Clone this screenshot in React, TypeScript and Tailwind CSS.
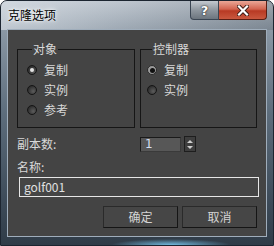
import React from "react";

type RadioKind = "off" | "onLight" | "onDark";

function Radio({ kind }: { kind: RadioKind }) {
  if (kind === "onDark") {
    return (
      <span className="w-[10px] h-[10px] shrink-0 rounded-full border border-[#2a2a2a] bg-[#9a9a9a] flex items-center justify-center">
        <span className="w-[5px] h-[5px] rounded-full bg-[#111]" />
      </span>
    );
  }
  return (
    <span className="w-[10px] h-[10px] shrink-0 rounded-full border border-[#151515] bg-[radial-gradient(circle_at_65%_65%,#5c5c5c,#2c2c2c_75%)] flex items-center justify-center">
      {kind === "onLight" && <span className="w-[4px] h-[4px] rounded-full bg-[#e4e4e4]" />}
    </span>
  );
}

function RadioRow({ kind, label }: { kind: RadioKind; label: string }) {
  return (
    <div className="h-[20px] flex items-center gap-[7px]">
      <Radio kind={kind} />
      <span className="text-[12px] leading-[16px] text-[#d8d8d8]">{label}</span>
    </div>
  );
}

export default function App() {
  return (
    <div className="w-[274px] h-[246px] overflow-hidden rounded-t-[7px] border border-[#1c2530] bg-[linear-gradient(to_bottom,#b3bcc6_0px,#8a97a4_30px,#5e6e7d_110px,#3d4b59_200px,#2f3b47_246px)] flex flex-col font-['Noto_Sans_CJK_SC',sans-serif]">
      {/* title bar */}
      <div className="h-[29px] flex justify-between items-start bg-[linear-gradient(to_right,rgba(235,240,245,0.55),rgba(255,255,255,0.15)_45%,rgba(0,0,0,0.12))]">
        <div className="pl-[7px] pt-[6px] text-[12px] leading-[16px] text-black [text-shadow:0_0_6px_#fff,0_0_3px_#fff]">
          克隆选项
        </div>
        <div className="flex pr-[6px]">
          <div className="w-[29px] h-[19px] rounded-bl-[4px] border border-[#3a4552] border-t-0 bg-[linear-gradient(to_bottom,#c3c9cf,#8f979f_50%,#6c757e)] flex items-center justify-center text-white font-bold text-[13px] leading-none [text-shadow:0_0_2px_#222,0_0_1px_#222] font-['DejaVu_Sans',sans-serif]">
            ?
          </div>
          <div className="w-[48px] h-[19px] rounded-br-[4px] border border-[#5a1e14] border-t-0 border-l-0 bg-[linear-gradient(to_bottom,#eaa797,#d26450_45%,#b83a24_55%,#c9583f)] flex items-center justify-center">
            <svg width="12" height="11" viewBox="0 0 12 11">
              <path d="M2 1.5 L10 9.5 M10 1.5 L2 9.5" stroke="#3a1a14" strokeWidth="4" strokeLinecap="square" />
              <path d="M2 1.5 L10 9.5 M10 1.5 L2 9.5" stroke="#ffffff" strokeWidth="2.2" strokeLinecap="square" />
            </svg>
          </div>
        </div>
      </div>

      {/* client area */}
      <div className="mx-[7px] h-[206px] bg-[#444444] shadow-[0_0_0_1px_#9fadbb] flex flex-col pt-[11px] text-[#d8d8d8]">
        <div className="flex pl-[9px] gap-[5px]">
          <fieldset className="w-[118px] h-[87px] border border-[#161616] pl-[9px]">
            <legend className="ml-[5px] px-[1px] text-[12px] leading-[16px] text-[#d8d8d8]">对象</legend>
            <div className="flex flex-col pt-[3px]">
              <RadioRow kind="onLight" label="复制" />
              <RadioRow kind="off" label="实例" />
              <RadioRow kind="off" label="参考" />
            </div>
          </fieldset>
          <fieldset className="w-[117px] h-[87px] border border-[#161616] pl-[6px]">
            <legend className="ml-[5px] px-[1px] text-[12px] leading-[16px] text-[#d8d8d8]">控制器</legend>
            <div className="flex flex-col pt-[3px]">
              <RadioRow kind="onDark" label="复制" />
              <RadioRow kind="off" label="实例" />
            </div>
          </fieldset>
        </div>

        {/* copies */}
        <div className="flex items-center mt-[8px] pl-[9px] h-[16px]">
          <span className="w-[123px] text-[12px] leading-[16px]">副本数:</span>
          <div className="w-[41px] h-[15px] border border-[#1a1a1a] border-r-[#3a3a3a] border-b-[#3a3a3a] bg-[#575757] flex items-center pl-[4px] text-[12px] leading-none text-[#d4def0] font-['DejaVu_Sans',sans-serif]">
            1
          </div>
          <div className="ml-[3px] w-[12px] h-[16px] border border-[#1e1e1e] bg-[#3e3e3e] flex flex-col items-center justify-center gap-[3px]">
            <svg width="6" height="3" viewBox="0 0 6 3">
              <path d="M0 3 L3 0 L6 3 Z" fill="#cfcfcf" />
            </svg>
            <svg width="6" height="3" viewBox="0 0 6 3">
              <path d="M0 0 L3 3 L6 0 Z" fill="#cfcfcf" />
            </svg>
          </div>
        </div>

        {/* name */}
        <div className="mt-[7px] pl-[9px] h-[16px] text-[12px] leading-[16px]">名称:</div>
        <div className="mt-[2px] ml-[11px] w-[240px] h-[20px] border border-[#e6e6e6] bg-[#454545] flex items-center pl-[4px] text-[12px] leading-none text-[#e0e0e0]">
          golf001
        </div>

        {/* buttons */}
        <div className="mt-[9px] flex justify-end gap-[4px] pr-[9px]">
          <div className="w-[75px] h-[22px] border border-[#2a2a2a] border-r-[#151515] border-b-[#151515] bg-[#464646] flex items-center justify-center text-[12px] leading-none text-[#d4d4d4]">
            确定
          </div>
          <div className="w-[75px] h-[22px] border border-[#2a2a2a] border-r-[#151515] border-b-[#151515] bg-[#464646] flex items-center justify-center text-[12px] leading-none text-[#d4d4d4]">
            取消
          </div>
        </div>
      </div>

      {/* bottom frame */}
      <div className="flex-1 bg-[radial-gradient(ellipse_60px_6px_at_170px_100%,rgba(120,200,240,0.9),rgba(120,200,240,0)_100%)]" />
    </div>
  );
}
